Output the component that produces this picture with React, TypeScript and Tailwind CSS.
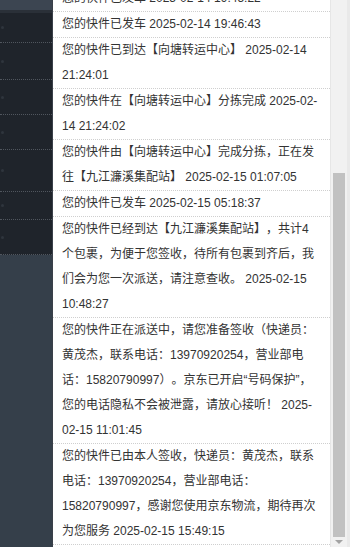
import React from "react";

const traces: string[] = [
  "您的快件已发车 2025-02-14 19:45:22",
  "您的快件已发车 2025-02-14 19:46:43",
  "您的快件已到达【向塘转运中心】 2025-02-14 21:24:01",
  "您的快件在【向塘转运中心】分拣完成 2025-02-14 21:24:02",
  "您的快件由【向塘转运中心】完成分拣，正在发往【九江濂溪集配站】 2025-02-15 01:07:05",
  "您的快件已发车 2025-02-15 05:18:37",
  "您的快件已经到达【九江濂溪集配站】，共计4个包裹，为便于您签收，待所有包裹到齐后，我们会为您一次派送，请注意查收。 2025-02-15 10:48:27",
  "您的快件正在派送中，请您准备签收（快递员：黄茂杰，联系电话：13970920254，营业部电话：15820790997）。京东已开启“号码保护”，您的电话隐私不会被泄露，请放心接听！ 2025-02-15 11:01:45",
  "您的快件已由本人签收，快递员：黄茂杰，联系电话：13970920254，营业部电话：15820790997，感谢您使用京东物流，期待再次为您服务 2025-02-15 15:49:15",
];

// left menu rows (heights in px, border included)
const menuRows = [30, 37, 35, 35, 42, 28, 35];

const App: React.FC = () => {
  return (
    <div className="flex h-[547px] w-[350px] overflow-hidden bg-white font-[family-name:'Liberation_Sans','Noto_Sans_CJK_SC',sans-serif]">
      {/* dark side menu */}
      <div className="flex w-[53px] shrink-0 flex-col border-r border-[#3a4049] bg-[#1f242b]">
        <div className="h-[10px] bg-[#3c4551]" />
        <div className="h-[3px] bg-[#2a3038]" />
        {menuRows.map((h, i) => (
          <div
            key={i}
            className="flex items-center border-b border-dotted border-[#50565e] pl-[1px]"
            style={{ height: h }}
          >
            <span className="h-[3px] w-[3px] rounded-full bg-[#2f353d]" />
          </div>
        ))}
        <div className="flex-1 bg-[#353f4a]" />
      </div>

      {/* trace list */}
      <div className="flex min-w-0 flex-1">
        <div className="min-w-0 flex-1 overflow-hidden">
          <ul className="-mt-[14px] [text-spacing-trim:space-all]">
            {traces.map((t, i) => (
              <li
                key={i}
                className="border-b border-dotted border-[#cfcfcf] pl-[9px] pr-[11px] text-[12px] leading-[25px] text-[#333]"
              >
                {t}
              </li>
            ))}
          </ul>
        </div>

        {/* scrollbar */}
        <div className="flex w-[17px] shrink-0 flex-col border-l border-[#e6e6e6] bg-[#f1f1f1]">
          <div className="h-[173px]" />
          <div className="mx-[2px] flex-1 bg-[#c1c1c1]" />
          <div className="flex h-[10px] justify-center pt-[3px]">
            <span className="h-0 w-0 border-x-[4px] border-t-[4px] border-x-transparent border-t-[#a3a3a3]" />
          </div>
        </div>
        <div className="w-[3px] shrink-0 bg-[#e9e9e9]" />
      </div>
    </div>
  );
};

export default App;
